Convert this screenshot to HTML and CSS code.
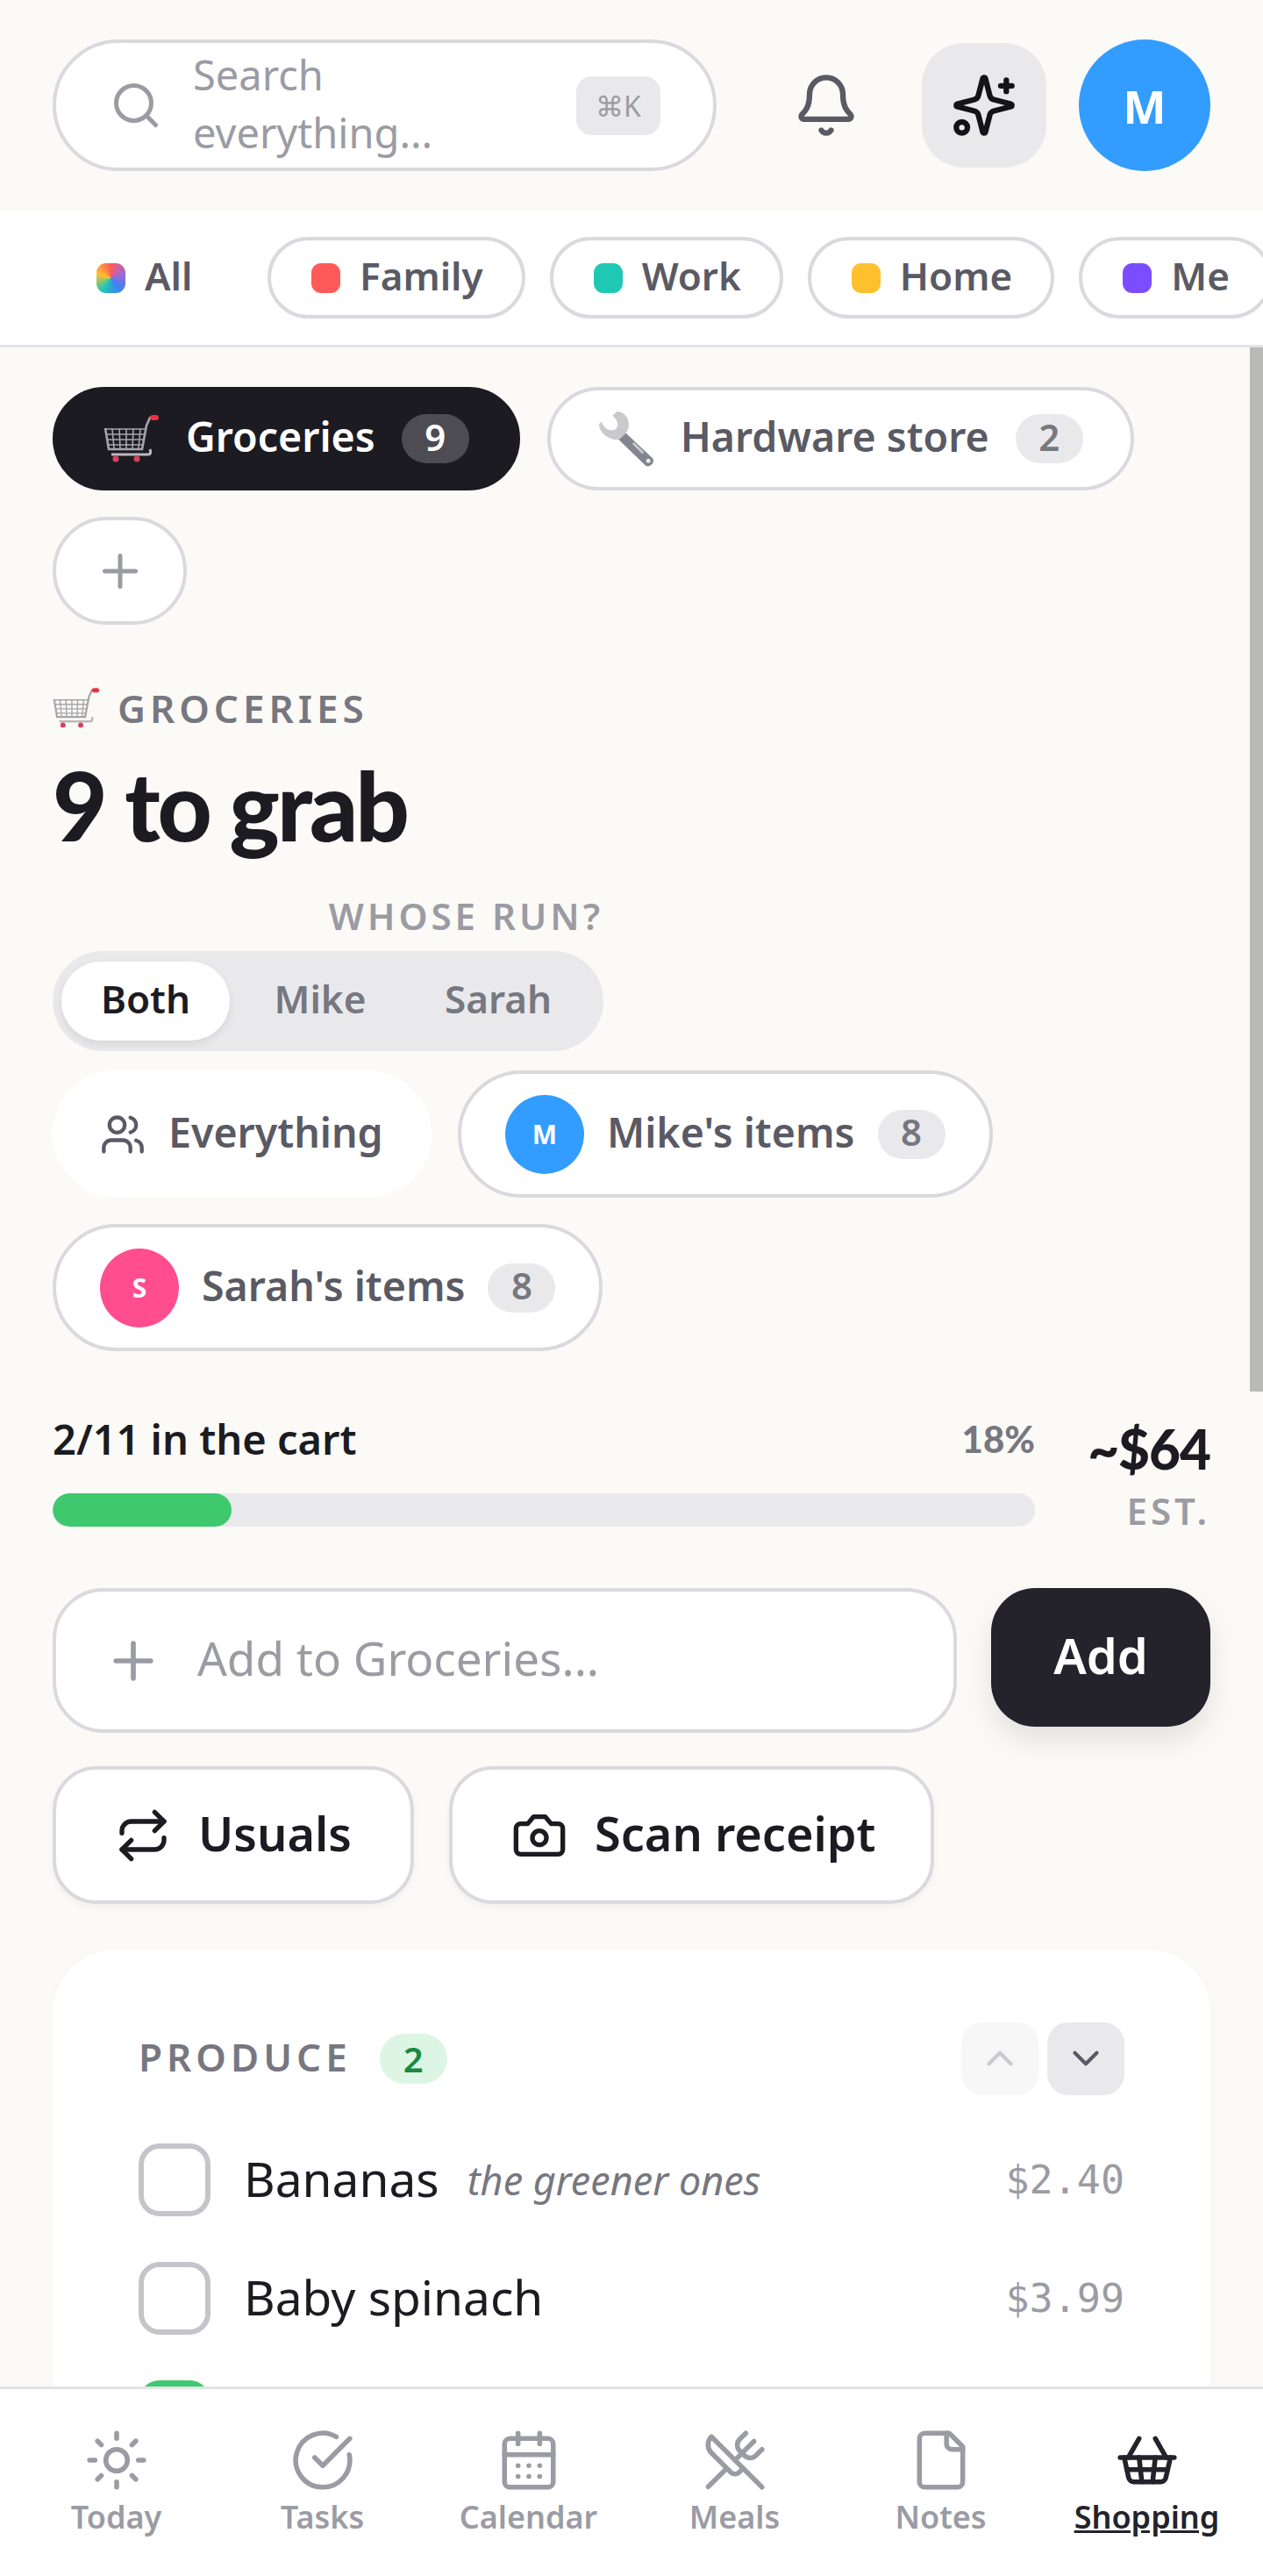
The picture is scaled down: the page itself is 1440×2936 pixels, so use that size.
FILE: index.html
```html
<!DOCTYPE html>
<html lang="en">
<head>
  <meta charset="UTF-8" />
  <meta name="viewport" content="width=device-width, initial-scale=1.0"/>
  <title>Shopping</title>
  <link rel="stylesheet" href="styles.css">
</head>
<body>
  <svg class="defs" xmlns="http://www.w3.org/2000/svg">
    <symbol id="cart" viewBox="0 0 64 54">
      <g fill="none" stroke="#a5a5aa" stroke-width="1.6">
        <path d="M2 16h46M3 22h44M4 28h42M5 34h40M10 16l2 22M18 16l1 22M26 16v22M34 16l-1 22M42 16l-2 22"/>
        <path stroke-width="2.6" d="M2 15l4 24h38l5-27 4-9h7"/>
        <path stroke-width="3" stroke="#b9b9bd" d="M9 45h42c3 0 3-3 2-6"/>
      </g>
      <rect x="53" y="0" width="10" height="6" rx="3" fill="#e8323f"/>
      <circle cx="14" cy="50" r="3.5" fill="#d8405a"/>
      <circle cx="38" cy="50" r="3.5" fill="#d8405a"/>
    </symbol>
    <symbol id="wrench" viewBox="0 0 66 66">
      <path d="M22 32l8-8 34 32c2 3 1 6-2 8-2 2-5 2-7 0z" fill="#85858f"/>
      <path d="M42 39l10 10" stroke="#c9c9cf" stroke-width="3" stroke-linecap="round"/>
      <circle cx="59" cy="59" r="2.5" fill="#eee"/>
      <path d="M22 1c8 0 14 7 14 15 0 4-1 8-4 11l-6 6c-4 2-9 1-13-1C6 29 1 22 1 16l3-3c2 6 6 10 11 10 5 1 8-3 8-7 0-3-2-6-6-10z" fill="#c9c9ce"/>
    </symbol>
  </svg>

  <header class="topbar">
    <div class="search">
      <svg class="icon search-icon" viewBox="0 0 24 24"><circle cx="11" cy="11" r="8"/><path d="m21 21-4.3-4.3"/></svg>
      <div class="search-text">Search everything...</div>
      <span class="kbd">⌘K</span>
    </div>
    <button class="bell-btn">
      <svg class="icon" viewBox="0 0 24 24"><path d="M10.268 21a2 2 0 0 0 3.464 0"/><path d="M3.262 15.326A1 1 0 0 0 4 17h16a1 1 0 0 0 .74-1.673C19.41 13.956 18 12.499 18 8A6 6 0 0 0 6 8c0 4.499-1.411 5.956-2.738 7.326"/></svg>
    </button>
    <button class="ai-btn">
      <svg class="icon" viewBox="0 0 24 24"><path d="M9.937 15.5A2 2 0 0 0 8.5 14.063l-6.135-1.582a.5.5 0 0 1 0-.962L8.5 9.936A2 2 0 0 0 9.937 8.5l1.582-6.135a.5.5 0 0 1 .963 0L14.063 8.5A2 2 0 0 0 15.5 9.937l6.135 1.581a.5.5 0 0 1 0 .964L15.5 14.063a2 2 0 0 0-1.437 1.437l-1.582 6.135a.5.5 0 0 1-.963 0z"/><path d="M20 3v4"/><path d="M22 5h-4"/><circle cx="4" cy="20" r="2"/></svg>
    </button>
    <div class="avatar avatar-top">M</div>
  </header>

  <div class="filters">
    <span class="filter filter-all"><i class="dot dot-all"></i><span class="tx">All</span></span>
    <span class="filter"><i class="dot dot-family"></i><span class="tx">Family</span></span>
    <span class="filter"><i class="dot dot-work"></i><span class="tx">Work</span></span>
    <span class="filter"><i class="dot dot-home"></i><span class="tx">Home</span></span>
    <span class="filter"><i class="dot dot-me"></i><span class="tx">Me</span></span>
  </div>

  <main class="content">
    <div class="scroll-thumb"></div>

    <div class="tabs">
      <div class="tab tab-active">
        <svg class="tab-emoji"><use href="#cart"/></svg>
        <span class="tx">Groceries</span>
        <span class="tab-count"><span class="tx">9</span></span>
      </div>
      <div class="tab">
        <svg class="tab-emoji"><use href="#wrench"/></svg>
        <span class="tx">Hardware store</span>
        <span class="tab-count"><span class="tx">2</span></span>
      </div>
      <div class="tab-add">
        <svg class="icon" viewBox="0 0 24 24"><path d="M5 12h14"/><path d="M12 5v14"/></svg>
      </div>
    </div>

    <div class="eyebrow">
      <svg class="eyebrow-emoji"><use href="#cart"/></svg>
      GROCERIES
    </div>
    <h1 class="title">9 to grab</h1>

    <div class="whose">
      <div class="whose-label">WHOSE RUN?</div>
      <div class="segment">
        <span class="seg seg-active"><span class="tx">Both</span></span>
        <span class="seg seg-mike"><span class="tx">Mike</span></span>
        <span class="seg seg-sarah"><span class="tx">Sarah</span></span>
      </div>
    </div>

    <div class="people">
      <div class="person person-all">
        <svg class="icon" viewBox="0 0 24 24"><path d="M16 21v-2a4 4 0 0 0-4-4H6a4 4 0 0 0-4 4v2"/><circle cx="9" cy="7" r="4"/><path d="M22 21v-2a4 4 0 0 0-3-3.87"/><path d="M16 3.13a4 4 0 0 1 0 7.75"/></svg>
        <span class="tx">Everything</span>
      </div>
      <div class="person">
        <span class="avatar avatar-small">M</span>
        <span class="tx">Mike's items</span>
        <span class="person-count"><span class="tx">8</span></span>
      </div>
      <div class="person">
        <span class="avatar avatar-small avatar-pink">S</span>
        <span class="tx">Sarah's items</span>
        <span class="person-count"><span class="tx">8</span></span>
      </div>
    </div>

    <div class="progress">
      <div class="progress-main">
        <div class="progress-row">
          <span class="progress-text">2/11 in the cart</span>
          <span class="progress-pct">18%</span>
        </div>
        <div class="bar"><div class="bar-fill" style="width:18.2%"></div></div>
      </div>
      <div class="estimate">
        <div class="estimate-value">~$64</div>
        <div class="estimate-label">EST.</div>
      </div>
    </div>

    <div class="add-row">
      <div class="add-input">
        <svg class="icon" viewBox="0 0 24 24"><path d="M5 12h14"/><path d="M12 5v14"/></svg>
        <span class="tx">Add to Groceries...</span>
      </div>
      <button class="add-btn">Add</button>
    </div>

    <div class="actions">
      <button class="action action-usuals">
        <svg class="icon" viewBox="0 0 24 24"><path d="m17 2 4 4-4 4"/><path d="M3 11v-1a4 4 0 0 1 4-4h14"/><path d="m7 22-4-4 4-4"/><path d="M21 13v1a4 4 0 0 1-4 4H3"/></svg>
        <span class="tx">Usuals</span>
      </button>
      <button class="action">
        <svg class="icon" viewBox="0 0 24 24"><path d="M14.5 4h-5L7 7H4a2 2 0 0 0-2 2v9a2 2 0 0 0 2 2h16a2 2 0 0 0 2-2V9a2 2 0 0 0-2-2h-3l-2.5-3z"/><circle cx="12" cy="13" r="3"/></svg>
        <span class="tx">Scan receipt</span>
      </button>
    </div>

    <section class="card">
      <div class="card-head">
        <span class="card-title">PRODUCE</span>
        <span class="card-count">2</span>
        <div class="card-arrows">
          <button class="arrow arrow-off"><svg class="icon" viewBox="0 0 24 24"><path d="m18 15-6-6-6 6"/></svg></button>
          <button class="arrow"><svg class="icon" viewBox="0 0 24 24"><path d="m6 9 6 6 6-6"/></svg></button>
        </div>
      </div>
      <div class="item">
        <span class="check"></span>
        <span class="item-name">Bananas</span>
        <span class="item-note">the greener ones</span>
        <span class="item-price">$2.40</span>
      </div>
      <div class="item">
        <span class="check"></span>
        <span class="item-name">Baby spinach</span>
        <span class="item-price">$3.99</span>
      </div>
      <div class="item">
        <span class="check check-done"></span>
      </div>
    </section>
  </main>

  <nav class="bottom-nav">
    <a class="nav-item">
      <svg class="icon" viewBox="0 0 24 24"><circle cx="12" cy="12" r="4"/><path d="M12 2v2"/><path d="M12 20v2"/><path d="m4.93 4.93 1.41 1.41"/><path d="m17.66 17.66 1.41 1.41"/><path d="M2 12h2"/><path d="M20 12h2"/><path d="m6.34 17.66-1.41 1.41"/><path d="m19.07 4.93-1.41 1.41"/></svg>
      <span>Today</span>
    </a>
    <a class="nav-item">
      <svg class="icon" viewBox="0 0 24 24"><path d="M21.801 10A10 10 0 1 1 17 3.335"/><path d="m9 11 3 3L22 4"/></svg>
      <span>Tasks</span>
    </a>
    <a class="nav-item">
      <svg class="icon" viewBox="0 0 24 24"><path d="M8 2v4"/><path d="M16 2v4"/><rect width="18" height="18" x="3" y="4" rx="2"/><path d="M3 10h18"/><path d="M8 14h.01"/><path d="M12 14h.01"/><path d="M16 14h.01"/><path d="M8 18h.01"/><path d="M12 18h.01"/><path d="M16 18h.01"/></svg>
      <span>Calendar</span>
    </a>
    <a class="nav-item">
      <svg class="icon" viewBox="0 0 24 24"><path d="m16 2-2.3 2.3a3 3 0 0 0 0 4.2l1.8 1.8a3 3 0 0 0 4.2 0L22 8"/><path d="M15 15 3.3 3.3a4.2 4.2 0 0 0 0 6l7.3 7.3c.7.7 2 .7 2.8 0L15 15Zm0 0 7 7"/><path d="m2.1 21.8 6.4-6.3"/><path d="m19 5-7 7"/></svg>
      <span>Meals</span>
    </a>
    <a class="nav-item">
      <svg class="icon" viewBox="0 0 24 24"><path d="M15 2H6a2 2 0 0 0-2 2v16a2 2 0 0 0 2 2h12a2 2 0 0 0 2-2V7Z"/><path d="M14 2v4a2 2 0 0 0 2 2h4"/></svg>
      <span>Notes</span>
    </a>
    <a class="nav-item nav-active">
      <svg class="icon" viewBox="0 0 24 24"><path d="m15 11-1 9"/><path d="m19 11-4-7"/><path d="M2 11h20"/><path d="m3.5 11 1.6 7.4a2 2 0 0 0 2 1.6h9.8a2 2 0 0 0 2-1.6l1.7-7.4"/><path d="M4.5 15.5h15"/><path d="m5 11 4-7"/><path d="m9 11 1 9"/></svg>
      <span>Shopping</span>
    </a>
  </nav>
</body>
</html>
```

FILE: styles.css
```css
:root {
  --bg: #fbfaf6;
  --white: #ffffff;
  --line: #d9d9de;
  --dark: #1c1b22;
  --text: #5a5a64;
  --muted: #9b9ba3;
  --chip: #e9e9ec;
  --blue: #339cff;
  --green: #3ec96f;
}
* {
  margin: 0;
  padding: 0;
  box-sizing: border-box;
}
html, body {
  height: 100%;
  overflow: hidden;
}
body {
  font-family: 'Noto Sans', sans-serif;
  background: var(--bg);
  color: var(--dark);
  display: flex;
  flex-direction: column;
}
button {
  font: inherit;
  color: inherit;
  border: none;
  background: none;
}
.defs {
  display: none;
}
.icon {
  fill: none;
  stroke: currentColor;
  stroke-width: 2;
  stroke-linecap: round;
  stroke-linejoin: round;
  flex-shrink: 0;
}
/* Noto sits a bit low in its line box, this lifts the label in a centered row */
.tx {
  margin-bottom: 6px;
}

/* top bar */
.topbar {
  height: 240px;
  flex-shrink: 0;
  padding: 45px 60px;
  display: flex;
  align-items: center;
}
.search {
  width: 757px;
  height: 150px;
  background: var(--white);
  border: 4px solid var(--line);
  border-radius: 75px;
  padding: 0 30px 0 61px;
  display: flex;
  align-items: center;
  color: var(--muted);
}
.search-icon {
  width: 60px;
  height: 60px;
}
.search-text {
  font-size: 47px;
  line-height: 66px;
  width: 300px;
  margin-left: 35px;
  margin-right: auto;
  padding-bottom: 4px;
}
.kbd {
  width: 96px;
  height: 67px;
  margin-right: 30px;
  background: var(--chip);
  border-radius: 18px;
  font-size: 32px;
  display: flex;
  align-items: center;
  justify-content: center;
  flex-shrink: 0;
}
.bell-btn {
  width: 76px;
  height: 76px;
  margin-left: 87px;
  color: var(--text);
}
.bell-btn .icon {
  width: 76px;
  height: 76px;
}
.ai-btn {
  width: 142px;
  height: 142px;
  margin-left: 71px;
  border-radius: 48px;
  background: var(--chip);
  display: flex;
  align-items: center;
  justify-content: center;
  color: #14131a;
}
.ai-btn .icon {
  width: 76px;
  height: 76px;
}
.avatar {
  background: var(--blue);
  color: var(--white);
  border-radius: 50%;
  font-weight: 700;
  display: flex;
  align-items: center;
  justify-content: center;
  flex-shrink: 0;
}
.avatar-top {
  width: 150px;
  height: 150px;
  margin-left: 37px;
  font-size: 52px;
}

/* category filter */
.filters {
  height: 156px;
  flex-shrink: 0;
  background: var(--white);
  border-bottom: 3px solid #e3e3e6;
  padding: 0 0 0 60px;
  display: flex;
  align-items: center;
  gap: 28px;
  overflow: hidden;
}
.filter {
  height: 93px;
  padding: 0 44px 0 46px;
  border: 4px solid var(--line);
  border-radius: 47px;
  display: flex;
  align-items: center;
  gap: 22px;
  font-size: 44px;
  font-weight: 600;
  color: var(--text);
  flex-shrink: 0;
}
.filter-all {
  border-color: transparent;
  width: 217px;
}
.dot {
  width: 33px;
  height: 34px;
  border-radius: 11px;
  display: block;
}
.dot-all {
  background: conic-gradient(#ff5a5a, #9a6ad8, #3b82f6, #1fc8b4, #ffc02e, #ff5a5a);
}
.dot-family { background: #ff5a5a; }
.dot-work { background: #1fc8b4; }
.dot-home { background: #ffc02e; }
.dot-me { background: #7c4dff; }

/* main scroll area */
.content {
  flex: 1;
  min-height: 0;
  position: relative;
  overflow: hidden;
  padding: 45px 60px 0;
}
.scroll-thumb {
  position: absolute;
  top: 0;
  right: 0;
  width: 15px;
  height: 1190px;
  background: #b9b9b6;
}
.tabs {
  display: flex;
  flex-wrap: wrap;
  gap: 30px 31px;
}
.tab {
  height: 118px;
  padding: 0 54px 0 54px;
  background: var(--white);
  border: 4px solid var(--line);
  border-radius: 59px;
  display: flex;
  align-items: center;
  gap: 30px;
  font-size: 46.5px;
  font-weight: 600;
  color: var(--text);
}
.tab-active {
  background: var(--dark);
  border-color: var(--dark);
  color: var(--white);
}
.tab-emoji {
  width: 64px;
  height: 64px;
}
.tab-count {
  min-width: 77px;
  height: 56px;
  border-radius: 28px;
  background: var(--chip);
  color: #77777f;
  font-size: 42px;
  display: flex;
  align-items: center;
  justify-content: center;
}
.tab-active .tab-count {
  background: #4d4c53;
  color: var(--white);
}
.tab-add {
  width: 153px;
  height: 123px;
  background: var(--white);
  border: 4px solid var(--line);
  border-radius: 62px;
  display: flex;
  align-items: center;
  justify-content: center;
  color: var(--muted);
}
.tab-add .icon {
  width: 60px;
  height: 60px;
}
.eyebrow {
  margin-top: 65px;
  height: 60px;
  display: flex;
  align-items: center;
  gap: 20px;
  font-size: 44px;
  font-weight: 600;
  letter-spacing: 5px;
  color: #77777f;
}
.eyebrow-emoji {
  width: 54px;
  height: 46px;
}
.title {
  font-family: 'Lato', sans-serif;
  font-size: 108px;
  font-weight: 900;
  letter-spacing: -3px;
  line-height: 120px;
  margin-top: 20px;
  color: var(--dark);
}
.whose {
  width: 628px;
  margin-top: 42px;
}
.whose-label {
  height: 50px;
  line-height: 50px;
  text-align: right;
  font-size: 42px;
  font-weight: 600;
  letter-spacing: 4px;
  color: var(--muted);
}
.segment {
  margin-top: 15px;
  height: 114px;
  background: var(--chip);
  border-radius: 57px;
  padding: 12px 10px;
  display: flex;
  align-items: center;
  font-size: 44px;
  font-weight: 600;
  color: #77777f;
}
.seg {
  height: 90px;
  display: flex;
  align-items: center;
  justify-content: center;
}
.seg-active {
  width: 192px;
  background: var(--white);
  border-radius: 45px;
  color: var(--dark);
  box-shadow: 0 4px 10px rgba(0, 0, 0, 0.08);
}
.seg-mike {
  width: 196px;
  margin-left: 5px;
}
.seg-sarah {
  width: 210px;
}
.people {
  margin-top: 22px;
  display: flex;
  flex-wrap: wrap;
  gap: 30px;
  width: 1320px;
}
.person {
  height: 145px;
  padding: 0 50px 0 50px;
  background: var(--white);
  border: 4px solid var(--line);
  border-radius: 73px;
  display: flex;
  align-items: center;
  gap: 26px;
  font-size: 46.5px;
  font-weight: 600;
  color: var(--text);
}
.person .icon {
  width: 52px;
  height: 52px;
}
.person-all {
  border-color: transparent;
  width: 432px;
  margin-right: 0;
}
.avatar-small {
  width: 90px;
  height: 90px;
  font-size: 30px;
}
.avatar-pink {
  background: #ff4d8d;
}
.person-count {
  min-width: 77px;
  height: 56px;
  border-radius: 28px;
  background: var(--chip);
  color: #77777f;
  font-size: 42px;
  display: flex;
  align-items: center;
  justify-content: center;
}

/* progress */
.progress {
  margin-top: 70px;
  display: flex;
  gap: 60px;
  height: 200px;
}
.progress-main {
  width: 1120px;
  flex-shrink: 0;
}
.progress-row {
  height: 60px;
  display: flex;
  justify-content: space-between;
  align-items: center;
}
.progress-text {
  font-size: 47px;
  font-weight: 600;
}
.progress-pct {
  font-family: 'Lato', sans-serif;
  font-size: 42px;
  font-weight: 900;
  color: #77777f;
}
.bar {
  margin-top: 32px;
  height: 38px;
  background: var(--chip);
  border-radius: 19px;
  overflow: hidden;
}
.bar-fill {
  height: 100%;
  background: var(--green);
  border-radius: 19px;
}
.estimate {
  flex: 1;
  min-width: 0;
  text-align: right;
  white-space: nowrap;
}
.estimate-value {
  font-family: 'Lato', sans-serif;
  font-size: 62px;
  font-weight: 900;
  letter-spacing: -1px;
  line-height: 76px;
  margin-top: 3px;
}
.estimate-label {
  font-size: 42px;
  font-weight: 600;
  letter-spacing: 4px;
  color: var(--muted);
  line-height: 50px;
  margin-top: 8px;
}

/* add row */
.add-row {
  display: flex;
  gap: 39px;
  align-items: flex-start;
}
.add-input {
  width: 1031px;
  height: 165px;
  background: var(--white);
  border: 4px solid var(--line);
  border-radius: 58px;
  padding-left: 54px;
  display: flex;
  align-items: center;
  gap: 39px;
  font-size: 53px;
  color: var(--muted);
}
.add-input .icon {
  width: 68px;
  height: 68px;
}
.add-btn {
  width: 250px;
  height: 158px;
  background: #24232c;
  color: var(--white);
  border-radius: 50px;
  font-size: 56px;
  font-weight: 600;
  padding-bottom: 6px;
  box-shadow: 0 16px 32px rgba(0, 0, 0, 0.1);
}
.actions {
  margin-top: 38px;
  display: flex;
  gap: 40px;
}
.action {
  height: 157px;
  padding: 0 62px 0 67px;
  background: var(--white);
  border: 4px solid var(--line);
  border-radius: 50px;
  display: flex;
  align-items: center;
  gap: 31px;
  font-size: 54px;
  font-weight: 600;
  box-shadow: 0 4px 10px rgba(0, 0, 0, 0.04);
}
.action-usuals {
  width: 412px;
}
.action .icon {
  width: 64px;
  height: 64px;
}

/* list card */
.card {
  margin-top: 52px;
  background: var(--white);
  border-radius: 72px;
  padding: 82px 98px 0;
  box-shadow: 0 2px 10px rgba(0, 0, 0, 0.03);
}
.card-head {
  height: 84px;
  display: flex;
  align-items: center;
}
.card-title {
  font-size: 44px;
  font-weight: 600;
  letter-spacing: 5px;
  color: #77777f;
  margin-bottom: 4px;
}
.card-count {
  margin-left: 32px;
  width: 77px;
  height: 57px;
  border-radius: 29px;
  background: #dcf6e3;
  color: #1a8a3f;
  font-size: 40px;
  font-weight: 600;
  display: flex;
  align-items: center;
  justify-content: center;
}
.card-arrows {
  margin-left: auto;
  display: flex;
  gap: 10px;
}
.arrow {
  width: 88px;
  height: 83px;
  border-radius: 24px;
  background: var(--chip);
  color: var(--text);
  display: flex;
  align-items: center;
  justify-content: center;
}
.arrow .icon {
  width: 50px;
  height: 50px;
}
.arrow-off {
  background: #f7f7f8;
  color: #c9c9ce;
}
.item {
  height: 83px;
  margin-top: 52px;
  display: flex;
  align-items: center;
}
.card-head + .item {
  margin-top: 55px;
}
.check {
  width: 82px;
  height: 83px;
  border: 6px solid #c4c4ca;
  border-radius: 24px;
  flex-shrink: 0;
}
.check-done {
  background: var(--green);
  border-color: var(--green);
}
.item-name {
  margin-left: 38px;
  font-size: 55px;
  margin-bottom: 4px;
}
.item-note {
  margin-left: 32px;
  font-size: 45px;
  font-style: italic;
  color: #77777f;
}
.item-price {
  margin-left: auto;
  font-family: 'DejaVu Sans Mono', monospace;
  font-size: 45px;
  color: var(--muted);
}

/* bottom nav */
.bottom-nav {
  height: 216px;
  flex-shrink: 0;
  background: var(--white);
  border-top: 3px solid #e3e3e6;
  padding: 0 15px;
  display: flex;
  position: relative;
}
.nav-item {
  width: 235px;
  padding-top: 44px;
  display: flex;
  flex-direction: column;
  align-items: center;
  color: var(--muted);
  font-size: 36px;
  font-weight: 600;
}
.nav-item .icon {
  width: 74px;
  height: 74px;
  stroke-width: 1.8;
}
.nav-item span {
  margin-top: 3px;
  line-height: 50px;
}
.nav-active {
  color: #24232c;
}
.nav-active span {
  text-decoration: underline;
}
```
